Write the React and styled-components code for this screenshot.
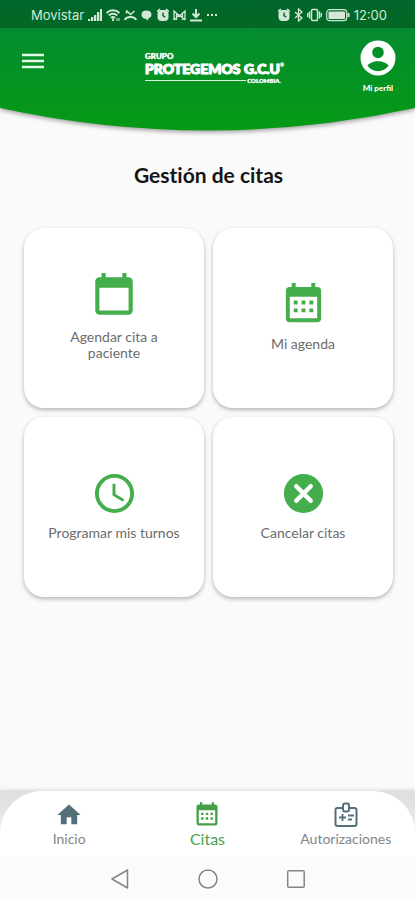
import React from 'react';
import styled, { createGlobalStyle } from 'styled-components';

const GlobalStyle = createGlobalStyle`
  *, *::before, *::after {
    box-sizing: border-box;
  }
  body {
    margin: 0;
    background: #fafafa;
    font-family: Lato, "Open Sans", sans-serif;
    font-variant-ligatures: none;
  }
  svg {
    display: block;
    flex: none;
  }
`

const Screen = styled.div`
  display: flex;
  flex-direction: column;
  min-height: 100vh;
`
const Header = styled.header`
  position: relative;
  height: 136px;
  color: #fff;
`
const Wave = styled.svg`
  position: absolute;
  inset: 0;
  width: 100%;
  height: 100%;
  filter: drop-shadow(0 2px 2px rgba(0, 0, 0, .35));
`
const StatusBar = styled.div`
  position: relative;
  display: flex;
  align-items: center;
  justify-content: space-between;
  height: 28px;
  padding: 2px 28px 0 31px;
  background: rgba(0, 0, 0, .25);
  color: #d5e8d8;
`
const StatusGroup = styled.div`
  display: flex;
  align-items: center;
  gap: 4px;
`
const StatusText = styled.span`
  font: 13px/16px Inter, sans-serif;
`
const TopRow = styled.div`
  position: relative;
  display: flex;
  align-items: flex-start;
  justify-content: space-between;
  padding: 9px 16px 0 22px;
`
const MenuButton = styled.button`
  display: flex;
  padding: 16px 0 0;
  border: 0;
  background: none;
  color: #e4fbe6;
  cursor: pointer;
`
const Logo = styled.div`
  display: flex;
  flex-direction: column;
  margin: 14px 0 0 28px;
  font-weight: 900;
  text-shadow: 0 0 1px #fff;
`
const LogoSmall = styled.span`
  font-size: 8px;
  line-height: 10px;
`
const LogoName = styled.span`
  display: flex;
  font-size: 14px;
  line-height: 16px;
  white-space: nowrap;
  -webkit-text-stroke: 1px #fff;
  sup {
    font-size: 5px;
    line-height: 8px;
    -webkit-text-stroke: 0;
  }
`
const LogoFoot = styled.span`
  display: flex;
  align-items: center;
  gap: 1px;
  padding-right: 3px;
  font-size: 6px;
  line-height: 7px;
  &::before {
    content: '';
    flex: 1;
    height: 1px;
    background: #d9f3dc;
  }
`
const Profile = styled.button`
  display: flex;
  flex-direction: column;
  align-items: center;
  gap: 4px;
  padding: 0;
  border: 0;
  background: none;
  color: #fff;
  font: 900 8px/10px Lato, sans-serif;
  cursor: pointer;
`
const Main = styled.main`
  flex: 1;
  padding: 27px 22px 24px 24px;
`
const Title = styled.h1`
  margin: 0 0 41px;
  color: #151515;
  font-size: 21px;
  line-height: 24px;
  font-weight: 700;
  text-align: center;
`
const Grid = styled.div`
  display: grid;
  grid-template-columns: 1fr 1fr;
  gap: 9px;
`
const Card = styled.button`
  display: flex;
  flex-direction: column;
  align-items: center;
  justify-content: center;
  gap: 8px;
  aspect-ratio: 1;
  padding: 0 16px 4px;
  border: 0;
  border-radius: 20px;
  background: #fff;
  box-shadow: 0 2px 4px rgba(0, 0, 0, .28);
  color: #43ae4b;
  cursor: pointer;
`
const CardLabel = styled.span`
  max-width: 136px;
  color: #6c6c6c;
  font: 14px/16px Lato, sans-serif;
`
const NavWrap = styled.div`
  background: linear-gradient(#dedede, #f4f4f4);
  box-shadow: 0 -1px 4px rgba(0, 0, 0, .14);
`
const Nav = styled.nav`
  display: grid;
  grid-template-columns: repeat(3, 1fr);
  height: 66px;
  border-radius: 42px 42px 0 0;
  background: #fff;
`
const NavLink = styled.a`
  display: flex;
  flex-direction: column;
  align-items: center;
  padding-top: 10px;
  color: ${({ $active }) => ($active ? '#43a047' : '#546e7a')};
  text-decoration: none;
  span {
    color: ${({ $active }) => ($active ? '#4a9f50' : '#808689')};
    font-size: ${({ $active }) => ($active ? 16 : 14)}px;
    line-height: 20px;
  }
`
const SystemBar = styled.div`
  display: flex;
  align-items: center;
  justify-content: center;
  gap: 64px;
  height: 43px;
  background: #fbfbfb;
`
const SystemButton = styled.button`
  display: flex;
  padding: 0;
  border: 0;
  background: none;
  cursor: pointer;
`

const BLANK = 'M19 19H5V8h14m-3-7v2H8V1H6v2H5a2 2 0 0 0-2 2v14a2 2 0 0 0 2 2h14a2 2 0 0 0 2-2V5a2 2 0 0 0-2-2h-1V1z'
const MONTH = 'M9 10v2H7v-2zm4 0v2h-2v-2zm4 0v2h-2v-2zm2-7a2 2 0 0 1 2 2v14a2 2 0 0 1-2 2H5a2 2 0 0 1-2-2V5a2 2 0 0 1 2-2h1V1h2v2h8V1h2v2zm0 16V8H5v11zM9 14v2H7v-2zm4 0v2h-2v-2zm4 0v2h-2v-2z'
const CLOCK = 'M12 20a8 8 0 1 0 0-16 8 8 0 0 0 0 16m0-18a10 10 0 1 1 0 20 10 10 0 0 1 0-20m.5 5v5.25l4.5 2.67-.75 1.23L11 13V7z'
const HOME = 'M10 20v-6h4v6h5v-8h3L12 3 2 12h3v8z'
const ACCOUNT = 'M12 2a10 10 0 1 0 0 20 10 10 0 0 0 0-20m0 3.5a3.3 3.3 0 1 1 0 6.6 3.3 3.3 0 0 1 0-6.6M12 19.6a8 8 0 0 1-6-3.2c.5-1.6 3.8-2.6 6-2.6s5.5 1 6 2.6a8 8 0 0 1-6 3.2'

const Icon = ({ d, size }) => (
  <svg width={size} height={size} viewBox="0 0 24 24" fill="currentColor" fillRule="evenodd" aria-hidden="true">
    <path d={d} />
  </svg>
)

const CancelIcon = () => (
  <svg width="47" height="47" viewBox="0 0 24 24" aria-hidden="true">
    <circle cx="12" cy="12" r="10" fill="currentColor" />
    <path d="M8.300 8.300l7.400 7.400M15.700 8.300l-7.400 7.400" stroke="#fff" strokeWidth="2.300" strokeLinecap="round" />
  </svg>
)

const MenuIcon = () => (
  <svg width="22" height="16" viewBox="0 0 22 16" fill="none" stroke="currentColor" strokeWidth="2.600" aria-hidden="true">
    <path d="M0 2h22M0 8h22M0 14h22" />
  </svg>
)

const BadgeIcon = () => (
  <svg width="28" height="28" viewBox="0 0 28 28" fill="none" stroke="currentColor" strokeWidth="2" aria-hidden="true">
    <path d="M11 7H5.500a2 2 0 0 0-2 2v14a2 2 0 0 0 2 2h17a2 2 0 0 0 2-2V9a2 2 0 0 0-2-2H17" />
    <rect x="11" y="2.500" width="6" height="8" rx="2" />
    <path d="M7 16.500h7M10.500 13v7M16 14.500h6M16 18.500h4" strokeWidth="1.800" />
  </svg>
)

const AlarmIcon = () => (
  <svg width="12" height="14" viewBox="0 0 12 14">
    <path d="M0 3.500L3 1M12 3.500L9 1" stroke="currentColor" strokeWidth="1.500" />
    <rect x=".5" y="2" width="11" height="11" rx="4" fill="currentColor" />
    <path d="M6 4.500v3.200l2.200 1.500" fill="none" stroke="#00662a" strokeWidth="1.400" />
  </svg>
)

const LeftStatus = () => (
  <StatusGroup>
    <StatusText>Movistar</StatusText>
    <svg width="14" height="14" viewBox="0 0 14 14" fill="currentColor">
      <path d="M0 11h2.300v2H0zM3 9h2.300v4H3zM6 7h2.300v6H6zM9 4h2.300v9H9zM12 1h2v12h-2z" />
    </svg>
    <svg width="14" height="14" viewBox="0 0 14 14" fill="none" stroke="currentColor" strokeWidth="1.900">
      <path d="M.5 5a9 9 0 0 1 13 0M2.800 7.500a6 6 0 0 1 8.400 0M5 10a3 3 0 0 1 4 0M7 10.500V13" />
      <path d="M11 10v3M13 10v3" strokeWidth="1" />
    </svg>
    <svg width="13" height="14" viewBox="0 0 13 14" fill="none" stroke="currentColor" strokeWidth="1.500">
      <path d="M2.500 2.500l4 4L10.500 3M2.500 2.500v3" />
      <path d="M1 12c1-4 10-4 11 0" strokeWidth="2.200" />
    </svg>
    <svg width="12" height="14" viewBox="0 0 12 14" fill="currentColor">
      <path d="M5.500 2.500c3 0 5 1.500 5 4s-1.500 3-3 4l-1 2-1.500-1.500C2 10.500.5 9 .5 6.500s2-4 5-4" />
    </svg>
    <AlarmIcon />
    <svg width="13" height="14" viewBox="0 0 13 14" fill="none" stroke="currentColor" strokeWidth="1.300">
      <path d="M1 12V3l5.500 5L12 3v9M3.500 12V5.500M9.500 12V5.500M1 12l5-5 6 5" />
    </svg>
    <svg width="12" height="14" viewBox="0 0 12 14" fill="none" stroke="currentColor" strokeWidth="2">
      <path d="M6 1v8M2.500 5.500L6 9l3.500-3.500M0 12.500h12" />
    </svg>
    <svg width="12" height="14" viewBox="0 0 12 14" fill="currentColor">
      <path d="M1 6h2v2H1zM5 6h2v2H5zM9 6h2v2H9z" />
    </svg>
  </StatusGroup>
)

const RightStatus = () => (
  <StatusGroup>
    <AlarmIcon />
    <svg width="9" height="14" viewBox="0 0 9 14" fill="none" stroke="currentColor" strokeWidth="1.300">
      <path d="M1 4l7 6-3.500 3V1L8 4l-7 6" />
    </svg>
    <svg width="15" height="14" viewBox="0 0 15 14" fill="none" stroke="currentColor" strokeWidth="1.500">
      <rect x="4.500" y="1.500" width="6" height="11" rx="1" />
      <path d="M2.500 3.500v7M12.500 3.500v7M.5 5v4M14.500 5v4" />
    </svg>
    <svg width="24" height="14" viewBox="0 0 24 14" fill="none" stroke="currentColor">
      <rect x=".7" y="1.700" width="20" height="11" rx="3" strokeWidth="1.200" />
      <rect x="2.500" y="3.500" width="16.500" height="7.500" rx="1" fill="currentColor" stroke="none" />
      <path d="M22.500 5v4" strokeWidth="2" />
    </svg>
    <StatusText>12:00</StatusText>
  </StatusGroup>
)

const actions = [
  { label: 'Agendar cita a paciente', icon: <Icon d={BLANK} size={50} /> },
  { label: 'Mi agenda', icon: <Icon d={MONTH} size={47} /> },
  { label: 'Programar mis turnos', icon: <Icon d={CLOCK} size={47} /> },
  { label: 'Cancelar citas', icon: <CancelIcon /> },
]

const App = () => {
  return (
    <Screen>
      <GlobalStyle />
      <Header>
        <Wave viewBox="0 0 415 136" preserveAspectRatio="none" aria-hidden="true">
          <defs>
            <linearGradient id="green" x1="0" y1="0" x2="0" y2="1">
              <stop offset="0" stopColor="#00893a" />
              <stop offset=".25" stopColor="#048c2f" />
              <stop offset="1" stopColor="#069a14" />
            </linearGradient>
          </defs>
          <path d="M0 0h415v108Q207.500 153 0 108z" fill="url(#green)" />
        </Wave>
        <StatusBar>
          <LeftStatus />
          <RightStatus />
        </StatusBar>
        <TopRow>
          <MenuButton aria-label="Menú"><MenuIcon /></MenuButton>
          <Logo>
            <LogoSmall>GRUPO</LogoSmall>
            <LogoName>PROTEGEMOS G.C.U<sup>®</sup></LogoName>
            <LogoFoot>COLOMBIA.</LogoFoot>
          </Logo>
          <Profile>
            <Icon d={ACCOUNT} size={42} />
            Mi perfil
          </Profile>
        </TopRow>
      </Header>
      <Main>
        <Title>Gestión de citas</Title>
        <Grid>
          {actions.map(({ label, icon }) => (
            <Card key={label}>
              {icon}
              <CardLabel>{label}</CardLabel>
            </Card>
          ))}
        </Grid>
      </Main>
      <NavWrap>
        <Nav>
          <NavLink href="#inicio"><Icon d={HOME} size={28} /><span>Inicio</span></NavLink>
          <NavLink href="#citas" $active><Icon d={MONTH} size={28} /><span>Citas</span></NavLink>
          <NavLink href="#autorizaciones"><BadgeIcon /><span>Autorizaciones</span></NavLink>
        </Nav>
      </NavWrap>
      <SystemBar>
        <SystemButton aria-label="Atrás">
          <svg width="24" height="24" viewBox="0 0 24 24" fill="none" stroke="#858585" strokeWidth="1.500">
            <path d="M19.500 3v18L4 12z" strokeLinejoin="round" />
          </svg>
        </SystemButton>
        <SystemButton aria-label="Pantalla principal">
          <svg width="24" height="24" viewBox="0 0 24 24" fill="none" stroke="#858585" strokeWidth="1.500">
            <circle cx="12" cy="12" r="9" />
          </svg>
        </SystemButton>
        <SystemButton aria-label="Recientes">
          <svg width="24" height="24" viewBox="0 0 24 24" fill="none" stroke="#858585" strokeWidth="1.500">
            <rect x="3.700" y="3.700" width="16.500" height="16.500" rx="1" />
          </svg>
        </SystemButton>
      </SystemBar>
    </Screen>
  )
}

export default App;
